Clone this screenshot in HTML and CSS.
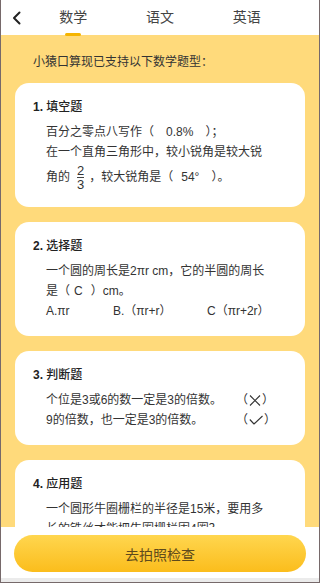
FILE: index.html
```html
<!DOCTYPE html>
<html lang="zh-CN">
<head>
<meta charset="utf-8">
<title>小猿口算</title>
<link rel="stylesheet" href="styles.css">
</head>
<body>
<div class="app">
  <header class="topbar">
    <div class="back">
      <svg width="10" height="14" viewBox="0 0 10 14"><path d="M7.5 1.5 L2 7 L7.5 12.5" fill="none" stroke="#222" stroke-width="2" stroke-linecap="round" stroke-linejoin="round"/></svg>
    </div>
    <div class="tab active">数学<span class="bar"></span></div>
    <div class="tab">语文</div>
    <div class="tab">英语</div>
    <div></div>
  </header>

  <main class="content">
    <p class="intro">小猿口算现已支持以下数学题型：</p>

    <section class="card">
      <h2 class="title"><span class="num">1.</span> 填空题</h2>
      <div class="body">
        <p class="line">百分之零点八写作（<span class="ans a1">0.8%</span>）；</p>
        <p class="line">在一个直角三角形中，较小锐角是较大锐</p>
        <p class="line frac-line">角的<span class="frac"><span>2</span><span class="den">3</span></span>，较大锐角是（<span class="ans a2">54°</span>）。</p>
      </div>
    </section>

    <section class="card">
      <h2 class="title"><span class="num">2.</span> 选择题</h2>
      <div class="body">
        <p class="line">一个圆的周长是2πr cm，它的半圆的周长</p>
        <p class="line">是（<span class="ans a3">C</span>）cm。</p>
        <p class="line options"><span>A.πr</span><span>B.（πr+r）</span><span>C（πr+2r）</span></p>
      </div>
    </section>

    <section class="card">
      <h2 class="title"><span class="num">3.</span> 判断题</h2>
      <div class="body">
        <div class="judge">
          <span>个位是3或6的数一定是3的倍数。</span>
          <span class="mark">（<svg width="12" height="11" viewBox="0 0 12 11"><path d="M1 0.5 L11 10.5 M11 0.5 L1 10.5" stroke="#333" stroke-width="1.1" fill="none"/></svg>）</span>
        </div>
        <div class="judge">
          <span>9的倍数，也一定是3的倍数。</span>
          <span class="mark">（<svg width="14" height="10" viewBox="0 0 14 10"><path d="M0.8 4.5 L5 9 L13.5 1" stroke="#333" stroke-width="1.1" fill="none" stroke-linejoin="round"/></svg>）</span>
        </div>
      </div>
    </section>

    <section class="card">
      <h2 class="title"><span class="num">4.</span> 应用题</h2>
      <div class="body">
        <p class="line">一个圆形牛圈栅栏的半径是15米，要用多</p>
        <p class="line">长的铁丝才能把牛圈栅栏围4圈？</p>
      </div>
    </section>
  </main>

  <footer class="footer">
    <button class="cta">去拍照检查</button>
  </footer>
</div>
</body>
</html>
```

FILE: styles.css
```css
* { box-sizing: border-box; }
html, body { margin: 0; padding: 0; }
body {
  font-family: "Liberation Sans", "Noto Sans CJK SC", sans-serif;
  color: #333;
  background: #fff;
}
.app {
  width: 320px;
  height: 583px;
  display: flex;
  flex-direction: column;
  border-left: 1px solid #76696a;
  border-right: 1px solid #76696a;
  border-bottom: 1px solid #76696a;
  overflow: hidden;
}
.topbar {
  height: 35px;
  flex: none;
  display: grid;
  grid-template-columns: 29px 1fr 1fr 1fr 29px;
  align-items: center;
  background: #fff;
  position: relative;
  z-index: 2;
}
.back {
  display: flex;
  align-items: center;
  justify-content: flex-start;
  padding-left: 11px;
  height: 100%;
}
.back svg { display: block; }
.tab {
  position: relative;
  height: 100%;
  display: flex;
  align-items: center;
  justify-content: center;
  font-size: 14px;
  color: #444;
  line-height: 1;
  padding-bottom: 2px;
}
.tab .bar {
  position: absolute;
  left: 50%;
  bottom: -1px;
  width: 16px;
  height: 3px;
  margin-left: -8px;
  background: #f5b400;
  border-radius: 2px;
}
.content {
  flex: 1;
  min-height: 0;
  overflow: hidden;
  background: #ffda7b;
  padding: 17px 14px 0;
  display: flex;
  flex-direction: column;
  gap: 15px;
}
.intro {
  margin: 0 0 -4px;
  padding-left: 18px;
  font-size: 12px;
  line-height: 20px;
  color: #333;
}
.card {
  flex: none;
  background: #fff;
  border-radius: 14px;
  padding: 14px 18px 15px;
}
.title {
  margin: 0 0 5px;
  font-size: 12px;
  line-height: 20px;
  font-weight: 500;
  color: #222;
}
.title .num { font-weight: 700; }
.body { padding-left: 13px; font-size: 12px; color: #333; }
.line {
  margin: 0;
  line-height: 20px;
  white-space: nowrap;
}
.frac-line { line-height: 30px; margin-top: 0; }
.frac {
  display: inline-flex;
  flex-direction: column;
  align-items: center;
  vertical-align: middle;
  line-height: 12px;
  font-size: 13px;
  margin: 0 4px 0 6px;
  padding: 0 1px;
}
.frac .den {
  border-top: 1px solid #444;
  padding-top: 1px;
  align-self: stretch;
  text-align: center;
}
.ans { display: inline-block; }
.a1 { margin: 0 12px 0 12px; }
.a2 { margin: 0 12px 0 8px; }
.a3 { margin: 0 8px 0 4px; }
.options { display: flex; }
.options span:nth-child(1) { width: 67px; }
.options span:nth-child(2) { width: 94px; }
.judge {
  display: grid;
  grid-template-columns: 190px auto;
  line-height: 20px;
  white-space: nowrap;
}
.mark { display: inline-flex; align-items: center; }
.mark svg { display: block; margin: 0 1px; }
.footer {
  flex: none;
  height: 55px;
  background: #fff;
  padding: 8px 13px 0;
  border-bottom: 4px solid #ebebeb;
}
.cta {
  display: block;
  width: 100%;
  height: 37px;
  border: none;
  border-radius: 19px;
  background: linear-gradient(180deg, #ffd64f 0%, #fbbd1c 100%);
  font-family: "Noto Sans CJK SC", sans-serif;
  font-size: 14px;
  color: #5e4a1c;
  padding: 0;
}
```
